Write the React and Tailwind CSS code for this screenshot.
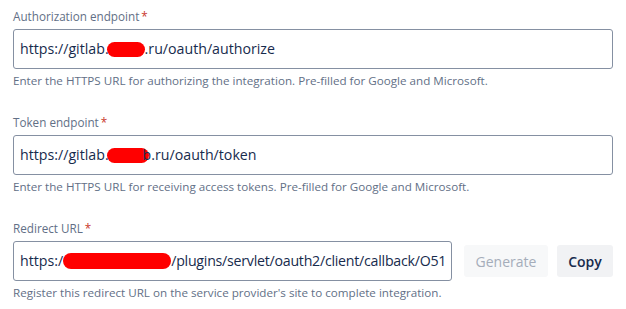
import React from "react";

const font = { fontFamily: '"Open Sans", "Noto Sans", sans-serif' };

function Blob({ w, h = 15, className = "" }) {
  return (
    <span
      className={`inline-block shrink-0 bg-[#ff0000] rounded-full ${className}`}
      style={{ width: w, height: h }}
    />
  );
}

function Label({ children }) {
  return (
    <div className="text-[11.7px] leading-[16px] text-[#626f86]">
      {children}
      <span className="text-[#c9372c] ml-[2px]">*</span>
    </div>
  );
}

function Helper({ children }) {
  return (
    <div className="mt-[4px] text-[11.65px] leading-[16px] text-[#626f86] whitespace-nowrap">
      {children}
    </div>
  );
}

function Input({ children, className = "" }) {
  return (
    <div
      className={`h-[40px] border border-[#8590a2] rounded-[3px] bg-white px-[6px] flex items-center overflow-hidden whitespace-nowrap text-[14.2px] text-[#172b4d] ${className}`}
    >
      {children}
    </div>
  );
}

export default function App() {
  return (
    <div className="w-[626px] h-[309px] bg-white pl-[13px] pt-[8px]" style={font}>
      <div className="w-[600px] flex flex-col gap-[25px]">
        <div>
          <Label>Authorization endpoint</Label>
          <Input className="mt-[5px]">
            <span className="shrink-0">https://gitlab.</span>
            <Blob w={38} className="-ml-[2px]" />
            <span className="shrink-0">.ru/oauth/authorize</span>
          </Input>
          <Helper>
            Enter the HTTPS URL for authorizing the integration. Pre-filled for Google and Microsoft.
          </Helper>
        </div>
        <div>
          <Label>Token endpoint</Label>
          <Input className="mt-[5px]">
            <span className="shrink-0">https://gitlab.</span>
            <Blob w={42} className="-ml-[2px] -mr-[6px]" />
            <span className="shrink-0">b.ru/oauth/token</span>
          </Input>
          <Helper>
            Enter the HTTPS URL for receiving access tokens. Pre-filled for Google and Microsoft.
          </Helper>
        </div>
        <div>
          <Label>Redirect URL</Label>
          <div className="flex items-center mt-[5px]">
            <Input className="w-[439px] shrink-0">
              <span className="shrink-0">https:/</span>
              <Blob w={108} h={16} />
              <span className="shrink-0 tracking-[-0.25px]">/plugins/servlet/oauth2/client/callback/O51</span>
            </Input>
            <button className="ml-[12px] h-[32px] w-[84px] rounded-[3px] bg-[#f7f8f9] text-[14px] text-[#a5adba]">
              Generate
            </button>
            <button className="ml-[9px] h-[32px] w-[56px] rounded-[3px] bg-[#f1f2f4] text-[14px] font-semibold text-[#172b4d]">
              Copy
            </button>
          </div>
          <Helper>
            Register this redirect URL on the service provider's site to complete integration.
          </Helper>
        </div>
      </div>
    </div>
  );
}
